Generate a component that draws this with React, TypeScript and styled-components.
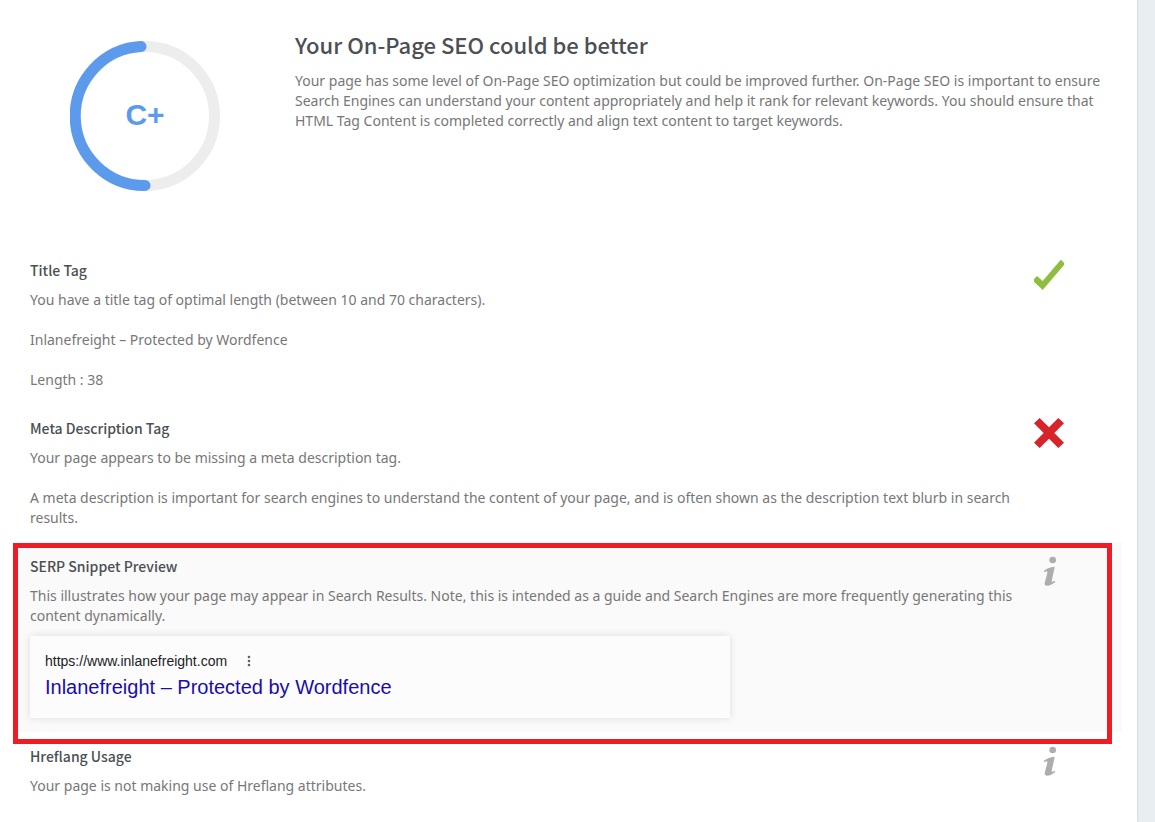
import React from "react";
import styled, { createGlobalStyle } from "styled-components";

const GlobalStyle = createGlobalStyle`
  * { box-sizing: border-box; }
  body {
    margin: 0;
    background: #e9eef2;
    color: #777;
    font-family: "Noto Sans", sans-serif;
    font-size: 14px;
    line-height: 20px;
  }
  h2, h3, p { margin: 0; }
`;

const headingFont = `"Noto Sans CJK SC", "Noto Sans", sans-serif`;

const Page = styled.main`
  min-height: 100vh;
  margin-right: 18px;
  padding: 0 15px;
  overflow: hidden;
  background: #fff;
  box-shadow: 0 0 2px rgba(0, 0, 0, 0.2);
`;

const Hero = styled.section`
  display: flex;
  align-items: flex-start;
  gap: 75px;
  padding: 30px 15px 55px 55px;
`;

const Gauge = styled.svg`
  flex: none;
  width: 150px;
  height: 150px;
  margin-top: 11px;
`;

const GaugeGrade = styled.text`
  font: bold 30px "Liberation Sans", Arial, sans-serif;
  fill: #5c9bec;
  text-anchor: middle;
`;

const HeroText = styled.div`
  flex: 1;
`;

const HeroTitle = styled.h2`
  margin-bottom: 13px;
  color: #4c4f53;
  font: 500 22px/28px ${headingFont};
`;

const Row = styled.section<{ $shaded?: boolean }>`
  position: relative;
  display: flex;
  gap: 15px;
  padding: 14px 58px 14px 15px;
  background: ${(p) => (p.$shaded ? "#fafafa" : "transparent")};
`;

const RowBody = styled.div`
  flex: 1;
`;

const RowTitle = styled.h3`
  margin-bottom: 10px;
  color: #4c4f53;
  font: 500 14px/20px ${headingFont};
`;

const Paragraph = styled.p`
  & + & {
    margin-top: 20px;
  }
`;

const StatusIcon = styled.svg`
  flex: none;
  width: 30px;
  height: 30px;
`;

const Snippet = styled.div`
  max-width: 700px;
  margin-top: 10px;
  padding: 15px;
  background: #fcfcfc;
  box-shadow: 0 0 8px rgba(0, 0, 0, 0.12);
  font-family: "Liberation Sans", Arial, sans-serif;
`;

const SnippetUrl = styled.div`
  display: flex;
  align-items: center;
  gap: 20px;
  color: #202124;
`;

const MenuButton = styled.button`
  display: flex;
  padding: 0;
  border: 0;
  background: none;
`;

const SnippetLink = styled.a`
  display: block;
  color: #1a0dab;
  font-size: 20px;
  line-height: 32px;
  text-decoration: none;
`;

const Highlight = styled.div`
  position: absolute;
  z-index: 1;
  inset: 1px 10px -12px -2px;
  border: 5px solid #ee1c25;
  pointer-events: none;
`;

type Status = "pass" | "fail" | "info";

function StatusMark({ status }: { status: Status }) {
  return (
    <StatusIcon viewBox="0 0 90 90" role="img" aria-label={status}>
      {status === "pass" && (
        <path
          fill="#8fbe3f"
          d="M0 57 L9 48 L26 63 L79 1 Q81 -1 83 1 L90 8 V15 L28 88 Q26 91 24 88 L0 65 Z"
        />
      )}
      {status === "fail" && (
        <path
          fill="#d9232b"
          d="M17 0 L45 28 L73 0 L90 16 L61 45 L90 74 L73 90 L45 62 L17 90 L0 74 L29 45 L0 16 Z"
        />
      )}
      {status === "info" && (
        <g fill="#adadad">
          <circle cx="56" cy="12" r="10" />
          <path d="M29 45 Q44 33 60 32 L62 34 L53 75 Q53 78 56 77 L62 74 L64 78 Q51 89 39 89 Q31 89 32 81 L40 51 Q41 45 36 46 L31 49 Z" />
        </g>
      )}
    </StatusIcon>
  );
}

interface CheckProps {
  title: string;
  status: Status;
  text: string[];
  highlighted?: boolean;
  children?: React.ReactNode;
}

function Check({ title, status, text, highlighted, children }: CheckProps) {
  return (
    <Row $shaded={highlighted}>
      <RowBody>
        <RowTitle>{title}</RowTitle>
        {text.map((t) => (
          <Paragraph key={t}>{t}</Paragraph>
        ))}
        {children}
      </RowBody>
      <StatusMark status={status} />
      {highlighted && <Highlight />}
    </Row>
  );
}

export default function App() {
  return (
    <>
      <GlobalStyle />
      <Page>
        <Hero>
          <Gauge viewBox="0 0 150 150" role="img" aria-label="Grade C+">
            <circle cx="75" cy="75" r="69.5" fill="none" stroke="#ededed" strokeWidth="11" />
            <path
              d="M71 5.6 A69.5 69.5 0 0 0 75 144.5"
              fill="none"
              stroke="#5c9bec"
              strokeWidth="11"
              strokeLinecap="round"
            />
            <GaugeGrade x="75" y="84">C+</GaugeGrade>
          </Gauge>
          <HeroText>
            <HeroTitle>Your On-Page SEO could be better</HeroTitle>
            <Paragraph>
              Your page has some level of On-Page SEO optimization but could be improved further.
              On-Page SEO is important to ensure Search Engines can understand your content
              appropriately and help it rank for relevant keywords. You should ensure that HTML Tag
              Content is completed correctly and align text content to target keywords.
            </Paragraph>
          </HeroText>
        </Hero>
        <Check
          title="Title Tag"
          status="pass"
          text={[
            "You have a title tag of optimal length (between 10 and 70 characters).",
            "Inlanefreight – Protected by Wordfence",
            "Length : 38",
          ]}
        />
        <Check
          title="Meta Description Tag"
          status="fail"
          text={[
            "Your page appears to be missing a meta description tag.",
            "A meta description is important for search engines to understand the content of your page, and is often shown as the description text blurb in search results.",
          ]}
        />
        <Check
          title="SERP Snippet Preview"
          status="info"
          highlighted
          text={[
            "This illustrates how your page may appear in Search Results. Note, this is intended as a guide and Search Engines are more frequently generating this content dynamically.",
          ]}
        >
          <Snippet>
            <SnippetUrl>
              https://www.inlanefreight.com
              <MenuButton aria-label="More options">
                <svg width="4" height="12" viewBox="0 0 4 12" fill="#5f6368">
                  <circle cx="2" cy="2" r="1.3" />
                  <circle cx="2" cy="6" r="1.3" />
                  <circle cx="2" cy="10" r="1.3" />
                </svg>
              </MenuButton>
            </SnippetUrl>
            <SnippetLink href="#">Inlanefreight – Protected by Wordfence</SnippetLink>
          </Snippet>
        </Check>
        <Check
          title="Hreflang Usage"
          status="info"
          text={["Your page is not making use of Hreflang attributes."]}
        />
      </Page>
    </>
  );
}
